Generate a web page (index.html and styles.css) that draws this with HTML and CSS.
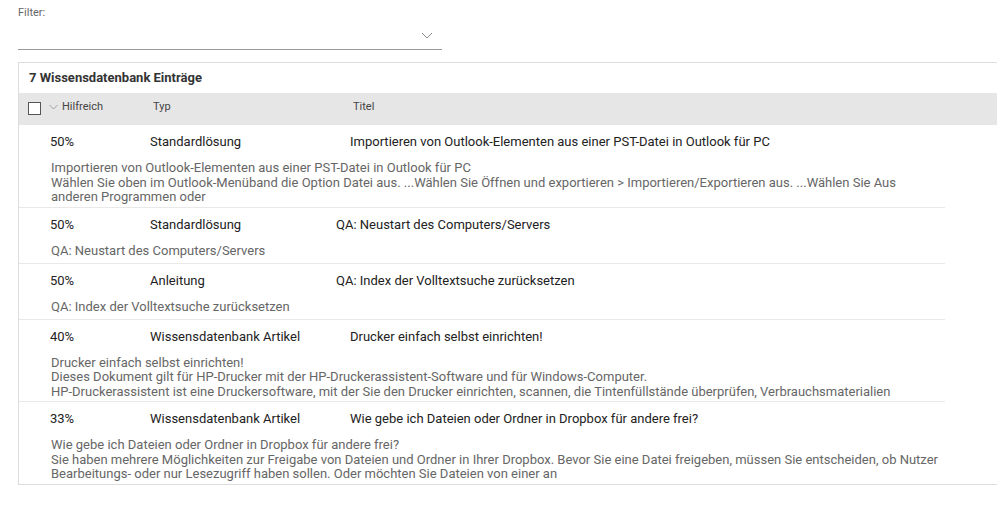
FILE: index.html
```html
<!DOCTYPE html>
<html lang="de">
<head>
<meta charset="utf-8">
<title>Wissensdatenbank</title>
<link rel="stylesheet" href="styles.css">
</head>
<body>
<div class="page">
  <div class="filter">
    <div class="filter-label">Filter:</div>
    <div class="filter-field">
      <svg class="filter-chevron" width="12" height="7" viewBox="0 0 12 7"><path d="M1 1 L6 6 L11 1" fill="none" stroke="#8a8a8a" stroke-width="1"/></svg>
    </div>
  </div>

  <section class="panel">
    <div class="panel-title">7 Wissensdatenbank Einträge</div>
    <div class="thead">
      <div class="th th-first">
        <span class="checkbox"></span>
        <svg class="sort-chevron" width="9" height="6" viewBox="0 0 9 6"><path d="M0.5 1 L4.5 5 L8.5 1" fill="none" stroke="#a0a0a0" stroke-width="1"/></svg>
        <span>Hilfreich</span>
      </div>
      <div class="th">Typ</div>
      <div class="th">Titel</div>
    </div>

    <div class="rows">
      <div class="row">
        <div class="cells">
          <div class="cell c-help">50%</div>
          <div class="cell c-type">Standardlösung</div>
          <div class="cell">Importieren von Outlook-Elementen aus einer PST-Datei in Outlook für PC</div>
        </div>
        <div class="desc">Importieren von Outlook-Elementen aus einer PST-Datei in Outlook für PC<br>Wählen Sie oben im Outlook-Menüband die Option Datei aus. ...Wählen Sie Öffnen und exportieren &gt; Importieren/Exportieren aus. ...Wählen Sie Aus anderen Programmen oder</div>
      </div>

      <div class="row">
        <div class="cells narrow">
          <div class="cell c-help">50%</div>
          <div class="cell c-type">Standardlösung</div>
          <div class="cell">QA: Neustart des Computers/Servers</div>
        </div>
        <div class="desc">QA: Neustart des Computers/Servers</div>
      </div>

      <div class="row">
        <div class="cells narrow">
          <div class="cell c-help">50%</div>
          <div class="cell c-type">Anleitung</div>
          <div class="cell">QA: Index der Volltextsuche zurücksetzen</div>
        </div>
        <div class="desc">QA: Index der Volltextsuche zurücksetzen</div>
      </div>

      <div class="row">
        <div class="cells">
          <div class="cell c-help">40%</div>
          <div class="cell c-type">Wissensdatenbank Artikel</div>
          <div class="cell">Drucker einfach selbst einrichten!</div>
        </div>
        <div class="desc">Drucker einfach selbst einrichten!<br>Dieses Dokument gilt für HP-Drucker mit der HP-Druckerassistent-Software und für Windows-Computer.<br>HP-Druckerassistent ist eine Druckersoftware, mit der Sie den Drucker einrichten, scannen, die Tintenfüllstände überprüfen, Verbrauchsmaterialien</div>
      </div>

      <div class="row">
        <div class="cells">
          <div class="cell c-help">33%</div>
          <div class="cell c-type">Wissensdatenbank Artikel</div>
          <div class="cell">Wie gebe ich Dateien oder Ordner in Dropbox für andere frei?</div>
        </div>
        <div class="desc">Wie gebe ich Dateien oder Ordner in Dropbox für andere frei?<br>Sie haben mehrere Möglichkeiten zur Freigabe von Dateien und Ordner in Ihrer Dropbox. Bevor Sie eine Datei freigeben, müssen Sie entscheiden, ob Nutzer Bearbeitungs- oder nur Lesezugriff haben sollen. Oder möchten Sie Dateien von einer an</div>
      </div>
    </div>
  </section>
</div>
</body>
</html>
```

FILE: styles.css
```css
html, body {
  margin: 0;
  padding: 0;
  background: #ffffff;
}

body {
  font-family: Roboto, "Liberation Sans", Arial, sans-serif;
  color: #222222;
  overflow: hidden;
}

.page {
  padding: 0 0 0 18px;
}

.filter {
  width: 424px;
  padding-top: 6px;
}

.filter-label {
  font-size: 11px;
  line-height: 13px;
  color: #666666;
}

.filter-field {
  height: 27px;
  border-bottom: 1px solid #9a9a9a;
  display: flex;
  justify-content: flex-end;
  align-items: center;
  padding-right: 9px;
  padding-top: 3px;
  box-sizing: content-box;
}

.filter-chevron {
  display: block;
}

.panel {
  margin-top: 12px;
  border-top: 1px solid #dddddd;
  border-left: 1px solid #dddddd;
  border-bottom: 1px solid #dddddd;
}

.panel-title {
  height: 30px;
  line-height: 30px;
  padding-left: 10px;
  font-size: 13px;
  font-weight: 700;
  color: #333333;
}

.thead {
  height: 32px;
  background: #e6e6e6;
  display: grid;
  grid-template-columns: 134px 200px 1fr;
  align-items: start;
  font-size: 11px;
  color: #444444;
}

.th {
  padding-top: 7px;
  line-height: 13px;
}

.th-first {
  display: flex;
  align-items: flex-start;
  padding-left: 9px;
  padding-top: 7px;
}

.checkbox {
  width: 11px;
  height: 11px;
  border: 1px solid #555555;
  background: #ffffff;
  margin-top: 2px;
  margin-right: 8px;
  flex: none;
}

.sort-chevron {
  display: block;
  margin-right: 4px;
  margin-top: 4px;
  flex: none;
}

.rows {
  width: 926px;
}

.row {
  padding: 9px 0 2px;
  border-bottom: 1px solid #e9e9e9;
}

.row:last-child {
  border-bottom: none;
}

.cells {
  display: grid;
  grid-template-columns: 100px 200px 1fr;
  padding-left: 31px;
  font-size: 13px;
  line-height: 16px;
  color: #222222;
}

.cells.narrow {
  grid-template-columns: 100px 186px 1fr;
}

.desc {
  margin-top: 11px;
  min-height: 17px;
  padding: 0 1px 0 32px;
  font-size: 13px;
  line-height: 14.5px;
  color: #666666;
}
```
